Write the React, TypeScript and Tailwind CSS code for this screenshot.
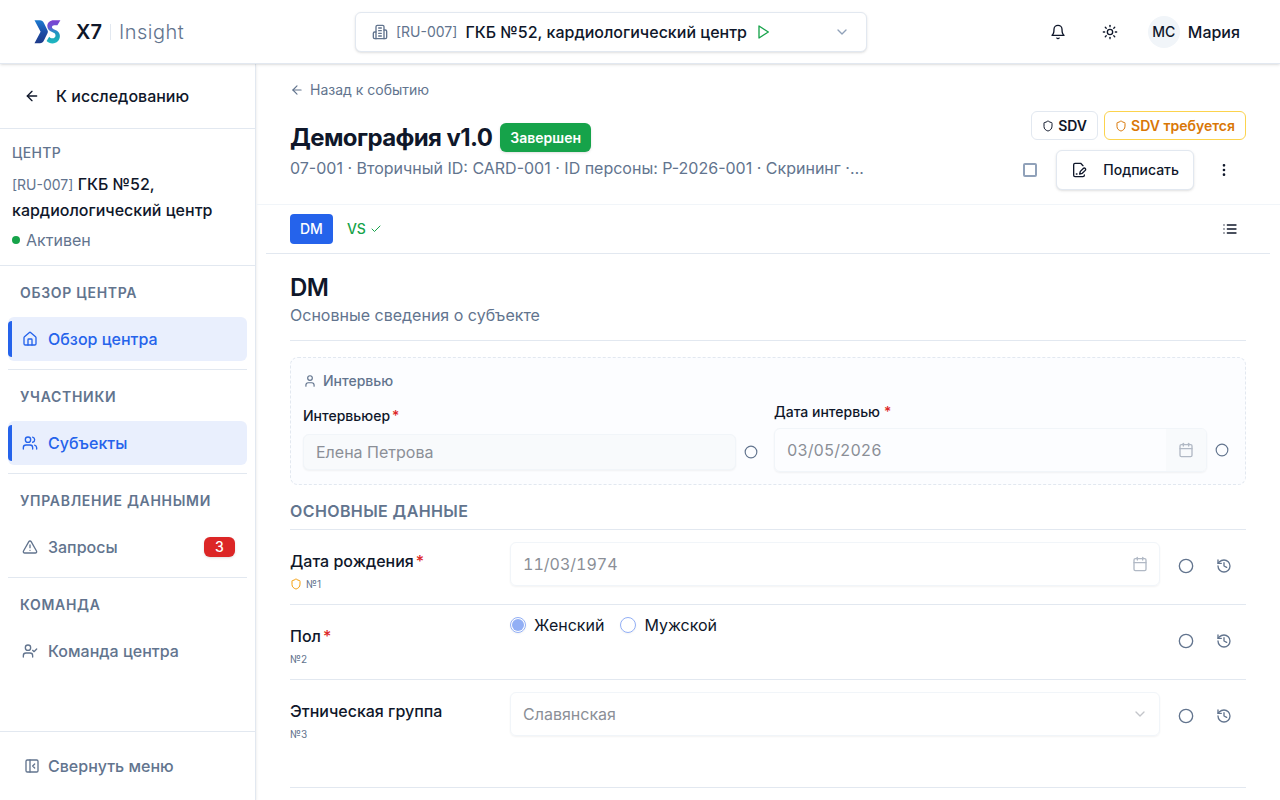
import React from "react";
import {
  ArrowLeft,
  Calendar,
  Check,
  ChevronDown,
  Circle,
  EllipsisVertical,
  History,
  House,
  PanelLeftClose,
  Shield,
  Sun,
  TriangleAlert,
  User,
  Users,
} from "lucide-react";

type IconProps = { className?: string; children?: React.ReactNode; strokeWidth?: number };

function Icon({ className, children, strokeWidth = 2 }: IconProps) {
  return (
    <svg
      viewBox="0 0 24 24"
      fill="none"
      stroke="currentColor"
      strokeWidth={strokeWidth}
      strokeLinecap="round"
      strokeLinejoin="round"
      className={className}
      aria-hidden="true"
    >
      {children}
    </svg>
  );
}

function BuildingIcon({ className }: IconProps) {
  return (
    <Icon className={className}>
      <path d="M6 22V4a2 2 0 0 1 2-2h8a2 2 0 0 1 2 2v18Z" />
      <path d="M6 12H4a2 2 0 0 0-2 2v6a2 2 0 0 0 2 2h2" />
      <path d="M18 9h2a2 2 0 0 1 2 2v9a2 2 0 0 1-2 2h-2" />
      <path d="M10 6h4M10 10h4M10 14h4M10 18h4" />
    </Icon>
  );
}

function BellIcon({ className }: IconProps) {
  return (
    <Icon className={className}>
      <path d="M6 8a6 6 0 0 1 12 0c0 7 3 9 3 9H3s3-2 3-9" />
      <path d="M10.3 21a1.94 1.94 0 0 0 3.4 0" />
    </Icon>
  );
}

function SignIcon({ className }: IconProps) {
  return (
    <Icon className={className}>
      <path d="M20 19.5v.5a2 2 0 0 1-2 2H6a2 2 0 0 1-2-2V4a2 2 0 0 1 2-2h8.5L18 5.5" />
      <path d="M8 18h1" />
      <path d="M18.42 9.61a2.1 2.1 0 1 1 2.97 2.97L16.95 17 13 18l.99-3.95 4.43-4.44Z" />
    </Icon>
  );
}

function PlayIcon({ className }: IconProps) {
  return (
    <Icon className={className}>
      <polygon points="6 3 20 12 6 21 6 3" />
    </Icon>
  );
}

function ListIcon({ className }: IconProps) {
  return (
    <Icon className={className}>
      <path d="M8 6h13M8 12h13M8 18h13M3 6h.01M3 12h.01M3 18h.01" />
    </Icon>
  );
}

function UserCheckIcon({ className }: IconProps) {
  return (
    <Icon className={className}>
      <path d="M16 21v-2a4 4 0 0 0-4-4H6a4 4 0 0 0-4 4v2" />
      <circle cx="9" cy="7" r="4" />
      <path d="m16 11 2 2 4-4" />
    </Icon>
  );
}

function Logo() {
  return (
    <svg viewBox="0 0 28 24" className="h-6 w-7 shrink-0 overflow-visible" aria-hidden="true">
      <defs>
        <linearGradient id="logo-blue" x1="0" y1="0" x2="0" y2="1">
          <stop offset="0" stopColor="#1b7ad0" />
          <stop offset="0.5" stopColor="#1d4fa8" />
          <stop offset="1" stopColor="#1e3a8a" />
        </linearGradient>
        <linearGradient id="logo-teal" x1="0" y1="0" x2="0" y2="1">
          <stop offset="0" stopColor="#7c3fd0" />
          <stop offset="0.3" stopColor="#6a55d4" />
          <stop offset="0.5" stopColor="#2490c4" />
          <stop offset="0.75" stopColor="#1aa8b8" />
          <stop offset="1" stopColor="#20b8c4" />
        </linearGradient>
      </defs>
      <path d="M2.500.2H8C9.800.2 11 1.200 11.900 2.900L15.600 10.400c.4.900.4 1.700 0 2.600L11.900 20.500C11 22.200 9.800 23.200 8 23.200H2.500L8.600 11.700z" fill="url(#logo-blue)" />
      <path d="M28.400.2H21.800C17.900.2 15.300 2.700 15.300 6.100c0 3 1.800 4.900 4.800 6 2.200.8 3.400 1.700 3.400 3.300 0 1.700-1.300 2.900-3.100 2.900-1.300 0-2.300-.5-3.200-1.500l-2.600 4.300c1.500 1.500 3.500 2.300 5.900 2.300 4.300 0 7.400-3 7.400-7.400 0-3.200-1.800-5-5-6.300-1.900-.8-2.900-1.400-2.900-2.500 0-1.200 1-1.900 2.300-1.900h3.100z" fill="url(#logo-teal)" />
    </svg>
  );
}

type NavEntry = {
  title: string;
  label: string;
  icon: React.ComponentType<{ className?: string }>;
  active?: boolean;
  count?: number;
};

const NAV: NavEntry[] = [
  { title: "Обзор центра", label: "Обзор центра", icon: House, active: true },
  { title: "Участники", label: "Субъекты", icon: Users, active: true },
  { title: "Управление данными", label: "Запросы", icon: TriangleAlert, count: 3 },
  { title: "Команда", label: "Команда центра", icon: UserCheckIcon },
];

function TopBar() {
  return (
    <header className="relative z-20 flex h-16 shrink-0 items-center justify-between border-b border-slate-200 bg-white px-8 shadow-sm">
      <a href="#" className="flex shrink-0 items-center gap-4">
        <Logo />
        <span className="flex items-center gap-2 text-xl">
          <span className="font-semibold">X7</span>
          <span className="h-4 w-px bg-slate-200" />
          <span className="font-light tracking-wide text-slate-500">Insight</span>
        </span>
      </a>
      <button type="button" className="flex h-10 w-full max-w-lg items-center gap-2 rounded-md border border-slate-200 bg-white px-4 shadow-sm">
        <BuildingIcon className="size-4 text-slate-500" />
        <span className="text-sm text-slate-500">[RU-007]</span>
        <span className="font-medium">ГКБ №52, кардиологический центр</span>
        <PlayIcon className="size-4 text-[#16a34a]" />
        <ChevronDown className="ml-auto size-4 text-slate-400" />
      </button>
      <div className="flex shrink-0 items-center gap-3">
        <button type="button" aria-label="Уведомления" className="flex size-10 items-center justify-center">
          <BellIcon className="size-4" />
        </button>
        <button type="button" aria-label="Тема" className="flex size-10 items-center justify-center">
          <Sun className="size-4" />
        </button>
        <button type="button" className="flex items-center gap-2 pr-2 pl-1.5 font-medium">
          <span className="flex size-8 items-center justify-center rounded-full bg-slate-100 text-sm">МС</span>
          Мария
        </button>
      </div>
    </header>
  );
}

function Sidebar() {
  return (
    <aside className="flex w-64 shrink-0 flex-col border-r border-slate-200 bg-white shadow-sm">
      <a href="#" className="flex h-[65px] shrink-0 items-center gap-4 border-b border-slate-200 px-6 font-medium">
        <ArrowLeft className="size-4" />
        К исследованию
      </a>
      <div className="border-b border-slate-200 p-3">
        <div className="text-sm leading-6 font-medium tracking-wide text-slate-500">ЦЕНТР</div>
        <div className="mt-1.5 leading-[26px] font-medium">
          <span className="text-sm font-normal text-slate-500">[RU-007]</span> ГКБ №52, кардиологический центр
        </div>
        <div className="mt-1 flex items-center gap-1.5 leading-[26px] text-slate-500">
          <span className="size-2 rounded-full bg-[#16a34a]" />
          Активен
        </div>
      </div>
      <nav className="flex-1 overflow-hidden px-2">
        {NAV.map(({ title, label, icon: NavIcon, active, count }) => (
          <section key={title} className="border-b border-slate-200 pb-2 last:border-0">
            <h2 className="px-3 pt-[17px] pb-3.5 text-sm leading-5 font-semibold tracking-wider text-slate-500 uppercase">{title}</h2>
            <a
              href="#"
              className={
                active
                  ? "relative flex h-11 items-center gap-2.5 rounded-md bg-[#e9effd] px-3.5 font-medium text-[#2563eb]"
                  : "relative flex h-11 items-center gap-2.5 rounded-md px-3.5 font-medium text-slate-500"
              }
            >
              {active && <span className="absolute inset-y-1 left-0 w-1 rounded-l-sm bg-[#2563eb]" />}
              <NavIcon className="size-4" />
              <span className="flex-1">{label}</span>
              {count && (
                <span className="-mr-0.5 w-[31px] rounded-md bg-[#dc2626] text-center text-sm leading-5 text-white shadow-sm">{count}</span>
              )}
            </a>
          </section>
        ))}
      </nav>
      <div className="border-t border-slate-200 p-3">
        <button type="button" className="flex h-11 items-center gap-2 px-3 font-medium text-slate-500">
          <PanelLeftClose className="size-4" />
          Свернуть меню
        </button>
      </div>
    </aside>
  );
}

function PageHeader() {
  return (
    <div className="border-b border-slate-100 px-[34px] pt-4 pb-3.5">
      <a href="#" className="flex w-fit items-center gap-1.5 text-sm text-slate-500">
        <ArrowLeft className="size-3.5" />
        Назад к событию
      </a>
      <div className="mt-[11px] flex items-start justify-between gap-6">
        <div className="min-w-0 flex-1 pt-3">
          <div className="flex items-center gap-2">
            <h1 className="text-2xl leading-[29px] font-bold tracking-tight">Демография v1.0</h1>
            <span className="rounded-md bg-[#16a34a] px-2.5 text-sm leading-[29px] font-semibold text-white shadow-sm">Завершен</span>
          </div>
          <p className="mt-1 truncate leading-6 text-slate-500">
            07-001 · Вторичный ID: CARD-001 · ID персоны: P-2026-001 · Скрининг ·…
          </p>
        </div>
        <div className="flex shrink-0 flex-col items-end gap-2.5">
          <div className="flex gap-1.5 text-sm leading-[27px] font-semibold">
            <span className="flex items-center gap-1 rounded-md border border-slate-200 px-2.5">
              <Shield className="size-3" strokeWidth={2} />
              SDV
            </span>
            <span className="flex items-center gap-1 rounded-md border border-[#fcd34d] px-2.5 text-[#d97706]">
              <Shield className="size-3" strokeWidth={2} />
              SDV требуется
            </span>
          </div>
          <div className="flex items-center">
            <input
              type="checkbox"
              aria-label="Выбрать форму"
              className="mr-[19px] size-3.5 appearance-none rounded-xs border-2 border-slate-400"
            />
            <button type="button" className="flex h-10 items-center gap-4 rounded-md border border-slate-200 bg-white px-3.5 text-sm font-medium shadow-sm">
              <SignIcon className="size-4" />
              Подписать
            </button>
            <button type="button" aria-label="Ещё" className="ml-2 flex h-10 w-11 items-center justify-center">
              <EllipsisVertical className="size-4" />
            </button>
          </div>
        </div>
      </div>
    </div>
  );
}

function Tabs() {
  return (
    <div className="mx-2.5 flex h-[49px] items-center gap-1 border-b border-slate-200 px-6 text-sm font-medium">
      <button type="button" className="h-[30px] rounded-sm bg-[#2563eb] px-2.5 text-white">
        DM
      </button>
      <button type="button" className="flex h-[30px] items-center gap-1 px-2.5 text-[#16a34a]">
        VS
        <Check className="size-3" strokeWidth={2} />
      </button>
      <button type="button" aria-label="Список форм" className="ml-auto flex size-8 items-center justify-center">
        <ListIcon className="size-4" />
      </button>
    </div>
  );
}

function Required() {
  return <span className="ml-0.5 text-[#dc2626]">*</span>;
}

function Interview() {
  return (
    <section className="mt-4 rounded-lg border border-dashed border-slate-200 bg-[#fcfdff] p-3">
      <h3 className="flex items-center gap-1.5 text-sm leading-[22px] font-medium text-slate-500">
        <User className="size-3.5" />
        Интервью
      </h3>
      <div className="mt-2.5 grid grid-cols-2 gap-3 text-sm font-medium">
        <div className="flex flex-col justify-end pb-0.5">
          <label htmlFor="interviewer" className="leading-6">
            Интервьюер
            <Required />
          </label>
          <div className="mt-1.5 flex items-center gap-2">
            <input
              id="interviewer"
              defaultValue="Елена Петрова"
              disabled
              className="h-9 min-w-0 flex-1 rounded-md border border-slate-100 bg-slate-50 px-3 text-base font-normal text-[#8b8f97] shadow-xs"
            />
            <Circle className="mr-1 size-3.5 text-slate-500" />
          </div>
        </div>
        <div className="flex flex-col">
          <label htmlFor="interview-date" className="leading-5">
            Дата интервью
            <span className="ml-1 text-[#dc2626]">*</span>
          </label>
          <div className="mt-1.5 flex items-center gap-2">
            <div className="flex h-11 min-w-0 flex-1 overflow-hidden rounded-md border border-slate-100 shadow-xs">
              <input
                id="interview-date"
                defaultValue="03/05/2026"
                disabled
                className="min-w-0 flex-1 px-3 text-base font-normal text-[#8b8f97] tabular-nums"
              />
              <button type="button" disabled aria-label="Открыть календарь" className="flex w-10 items-center justify-center bg-slate-50 text-[#b1b9c5]">
                <Calendar className="size-4" />
              </button>
            </div>
            <Circle className="mr-1 size-3.5 text-slate-500" />
          </div>
        </div>
      </div>
    </section>
  );
}

type RowProps = {
  id?: string;
  label: string;
  number: number;
  required?: boolean;
  sdv?: boolean;
  last?: boolean;
  children: React.ReactNode;
};

function FieldRow({ id, label, number, required, sdv, last, children }: RowProps) {
  return (
    <div className={last ? "flex h-[108px] items-start border-b border-slate-200 pt-3" : "flex h-[75px] items-start border-b border-slate-200 pt-3"}>
      <div className="w-[220px] shrink-0 pt-[7px]">
        <label htmlFor={id} className="block leading-6 font-medium">
          {label}
          {required && <Required />}
        </label>
        <div className="mt-[3px] flex items-center gap-1 text-[10px] leading-4 text-slate-500">
          {sdv && <Shield className="size-3 text-[#f59e0b]" />}№{number}
        </div>
      </div>
      <div className="min-w-0 flex-1">{children}</div>
      <div className="ml-2.5 flex h-12 w-[76px] shrink-0 items-center text-slate-500">
        <button type="button" aria-label="Статус" className="flex w-8 justify-center">
          <Circle className="size-4" />
        </button>
        <button type="button" aria-label="История" className="ml-1.5 flex w-8 justify-center">
          <History className="size-4" />
        </button>
      </div>
    </div>
  );
}

function Radio({ label, checked }: { label: string; checked?: boolean }) {
  return (
    <label className="flex items-center gap-2 leading-6">
      <span className="relative flex size-4 items-center justify-center">
        <input
          type="radio"
          name="sex"
          defaultChecked={checked}
          disabled
          className="peer size-4 appearance-none rounded-full border border-[#92aff5] shadow-xs"
        />
        <span className="absolute hidden size-3 rounded-full bg-[#92aff5] peer-checked:block" />
      </span>
      {label}
    </label>
  );
}

export default function App() {
  return (
    <div className="flex h-screen flex-col overflow-hidden bg-white font-[Inter,sans-serif] text-base text-[#0f172a]">
      <TopBar />
      <div className="flex min-h-0 flex-1">
        <Sidebar />
        <main className="min-w-0 flex-1 overflow-hidden">
          <PageHeader />
          <Tabs />
          <div className="px-[34px] pt-5">
            <div className="border-b border-slate-200 pb-3">
              <h2 className="text-2xl leading-7 font-semibold tracking-tight">DM</h2>
              <p className="leading-[26px] text-slate-500">Основные сведения о субъекте</p>
            </div>
            <Interview />
            <h3 className="border-b border-slate-200 pt-3.5 pb-1.5 leading-6 font-semibold tracking-wide text-slate-500 uppercase">Основные данные</h3>
            <FieldRow id="birth" label="Дата рождения" number={1} required sdv>
              <div className="flex h-11 rounded-md border border-slate-100 shadow-xs">
                <input id="birth" defaultValue="11/03/1974" disabled className="min-w-0 flex-1 px-3 text-[#8b8f97] tabular-nums" />
                <button type="button" disabled aria-label="Открыть календарь" className="flex w-[38px] items-center justify-center text-[#b1b9c5]">
                  <Calendar className="size-4" />
                </button>
              </div>
            </FieldRow>
            <FieldRow label="Пол" number={2} required>
              <div className="-mt-1 flex gap-4">
                <Radio label="Женский" checked />
                <Radio label="Мужской" />
              </div>
            </FieldRow>
            <FieldRow id="ethnic" label="Этническая группа" number={3} last>
              <div className="grid items-center">
                <select id="ethnic" disabled className="col-start-1 row-start-1 h-11 appearance-none rounded-md border border-slate-100 px-3 text-[#8b8f97] shadow-xs">
                  <option>Славянская</option>
                </select>
                <ChevronDown className="pointer-events-none col-start-1 row-start-1 mr-3 size-4 justify-self-end text-[#c3c5ca]" />
              </div>
            </FieldRow>
          </div>
        </main>
      </div>
    </div>
  );
}
